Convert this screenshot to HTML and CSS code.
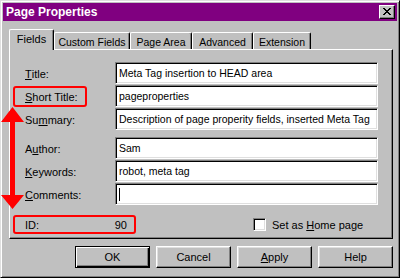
FILE: index.html
```html
<!DOCTYPE html>
<html lang="en">

<head>
    <meta charset="UTF-8">
    <title>Page Properties</title>
    <link rel="stylesheet" href="styles.css">
</head>

<body>
    <div class="window">
        <!-- Title bar -->
        <div class="titlebar">
            <span class="title">Page Properties</span>
            <span class="close">
                <svg width="8" height="7" viewBox="0 0 8 7" shape-rendering="crispEdges">
                    <path d="M0 0h2v1h-2zM6 0h2v1h-2zM1 1h2v1h-2zM5 1h2v1h-2zM2 2h4v1h-4zM3 3h2v1h-2zM2 4h4v1h-4zM1 5h2v1h-2zM5 5h2v1h-2zM0 6h2v1h-2zM6 6h2v1h-2z" fill="#000"/>
                </svg>
            </span>
        </div>

        <!-- Tabs -->
        <div class="tabs">
            <div class="tab active w-fields">Fields</div>
            <div class="tab w-custom">Custom Fields</div>
            <div class="tab w-area">Page Area</div>
            <div class="tab w-adv">Advanced</div>
            <div class="tab w-ext">Extension</div>
        </div>

        <!-- Fields panel -->
        <div class="panel">
            <div class="fields">
                <div class="row">
                    <span class="label"><u>T</u>itle:</span>
                    <span class="field">Meta Tag insertion to HEAD area</span>
                </div>
                <div class="row">
                    <span class="label mark"><u>S</u>hort Title:</span>
                    <span class="field">pageproperties</span>
                </div>
                <div class="row">
                    <span class="label">Su<u>m</u>mary:</span>
                    <span class="field">Description of page properity fields, inserted Meta Tag</span>
                </div>
                <div class="row spaced">
                    <span class="label">A<u>u</u>thor:</span>
                    <span class="field">Sam</span>
                </div>
                <div class="row">
                    <span class="label"><u>K</u>eywords:</span>
                    <span class="field">robot, meta tag</span>
                </div>
                <div class="row">
                    <span class="label"><u>C</u>omments:</span>
                    <span class="field"><span class="caret"></span></span>
                </div>
            </div>

            <div class="id-row">
                <div class="id-box mark">
                    <span>ID:</span>
                    <span>90</span>
                </div>
                <div class="check">
                    <span class="box"></span>
                    <span>Set as <u>H</u>ome page</span>
                </div>
            </div>
        </div>

        <!-- Buttons -->
        <div class="buttons">
            <span class="btn default">OK</span>
            <span class="btn">Cancel</span>
            <span class="btn"><u>A</u>pply</span>
            <span class="btn">Help</span>
        </div>

        <!-- Annotation arrow -->
        <svg class="arrow" width="26" height="106" viewBox="0 0 26 106">
            <polygon points="12.5,2 24,17 15,17 15,90 24,90 12.5,104 1,90 10,90 10,17 1,17" fill="#ff0000"/>
        </svg>
    </div>
</body>

</html>
```

FILE: styles.css
```css
/* Base */
* {
    margin: 0;
    padding: 0;
    box-sizing: border-box;
}

body {
    background-color: #c0c0c0;
    font-family: 'Liberation Sans', Arial, sans-serif;
    font-size: 11px;
    color: #000;
}

u {
    text-decoration: underline;
    text-underline-offset: 1px;
}

/* Window */
.window {
    position: relative;
    width: 400px;
    height: 278px;
    background-color: #c0c0c0;
    border: 1px solid;
    border-color: #dfdfdf #000 #000 #dfdfdf;
    box-shadow: inset 1px 1px #fff, inset -1px -1px #808080;
    padding: 2px;
}

/* Title bar */
.titlebar {
    height: 18px;
    background-color: #800080;
    display: flex;
    align-items: center;
    justify-content: space-between;
    padding: 0 2px 0 3px;
}

.title {
    color: #fff;
    font-weight: bold;
    font-size: 12px;
}

.close {
    width: 16px;
    height: 14px;
    background-color: #c0c0c0;
    border: 1px solid;
    border-color: #fff #000 #000 #fff;
    box-shadow: inset -1px -1px #808080;
    display: flex;
    align-items: center;
    justify-content: center;
    padding-bottom: 1px;
}

/* Tabs */
.tabs {
    display: flex;
    align-items: flex-end;
    height: 20px;
    margin-top: 8px;
    padding-left: 6px;
}

.tab {
    position: relative;
    height: 17px;
    border-top: 1px solid #fff;
    border-left: 1px solid #fff;
    border-right: 1px solid #000;
    border-radius: 2px 2px 0 0;
    box-shadow: inset -1px 0 #808080;
    text-align: center;
    padding-top: 3px;
    font-size: 10.5px;
    background-color: #c0c0c0;
}

.tab.active {
    height: 21px;
    margin-bottom: -1px;
    padding-top: 3px;
    font-size: 11px;
    z-index: 2;
}

.w-fields { width: 45px; }
.w-custom { width: 76px; }
.w-area { width: 62px; }
.w-adv { width: 61px; }
.w-ext { width: 58px; }

/* Panel */
.panel {
    width: 384px;
    margin-left: 6px;
    border: 1px solid;
    border-color: #fff #000 #000 #fff;
    box-shadow: inset -1px -1px #808080;
    padding: 12px 13px 4px 3px;
}

.fields {
    display: flex;
    flex-direction: column;
    gap: 1px;
}

.row {
    display: grid;
    grid-template-columns: 102px 263px;
    height: 22px;
    align-items: center;
}

.row.spaced {
    margin-top: 6px;
}

.label {
    width: 74px;
    height: 21px;
    display: flex;
    align-items: center;
    padding-left: 10px;
    border: 2px solid transparent;
    border-radius: 3px;
    align-self: end;
}

.mark {
    border: 2px solid #ff0000;
    border-radius: 3px;
}

.field {
    height: 22px;
    background-color: #fff;
    border: 1px solid;
    border-color: #808080 #fff #fff #808080;
    box-shadow: inset 1px 1px #000, inset -1px -1px #dfdfdf;
    padding: 0 3px;
    display: flex;
    align-items: center;
    white-space: nowrap;
    overflow: hidden;
    font-size: 10.5px;
}

.caret {
    display: inline-block;
    width: 1px;
    height: 13px;
    background-color: #000;
}

/* ID row */
.id-row {
    display: flex;
    align-items: center;
    margin-top: 10px;
}

.id-box {
    width: 123px;
    height: 19px;
    display: flex;
    align-items: center;
    justify-content: space-between;
    padding: 0 7px 0 10px;
}

.check {
    display: flex;
    align-items: center;
    gap: 6px;
    margin-left: 117px;
}

.box {
    width: 13px;
    height: 13px;
    background-color: #fff;
    border: 1px solid;
    border-color: #808080 #fff #fff #808080;
    box-shadow: inset 1px 1px #000, inset -1px -1px #dfdfdf;
}

/* Buttons */
.buttons {
    display: flex;
    justify-content: flex-end;
    gap: 6px;
    margin-top: 7px;
    padding-right: 4px;
}

.btn {
    width: 75px;
    height: 22px;
    display: flex;
    align-items: center;
    justify-content: center;
    border: 1px solid;
    border-color: #fff #000 #000 #fff;
    box-shadow: inset -1px -1px #808080, inset 1px 1px #dfdfdf;
}

.btn.default {
    border-color: #000;
    box-shadow: inset 1px 1px #fff, inset -1px -1px #000, inset -2px -2px #808080;
}

/* Annotation */
.arrow {
    position: absolute;
    left: -1px;
    top: 104px;
}
```
